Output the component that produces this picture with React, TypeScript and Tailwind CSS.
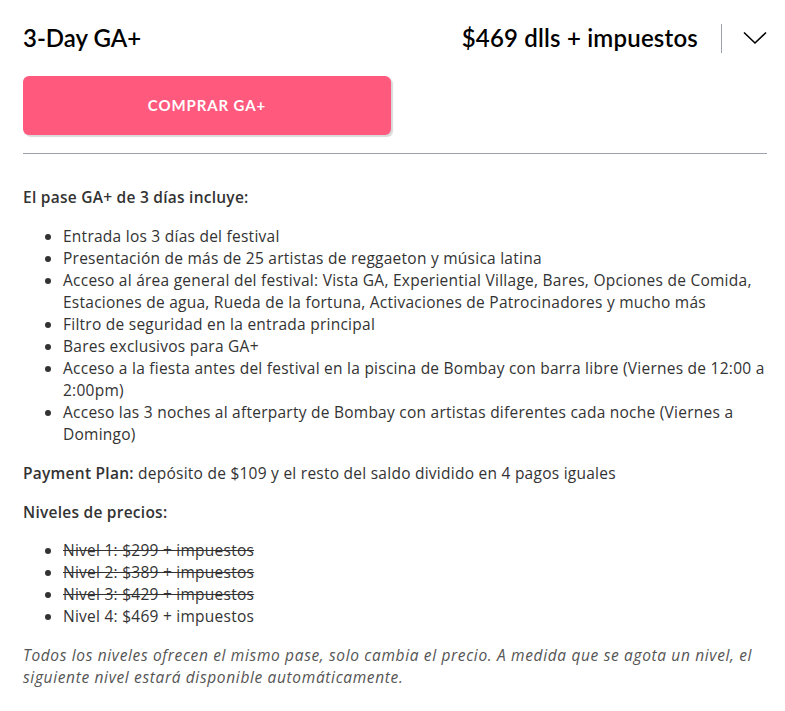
import { Fragment } from "react";

// each entry is one list item, split where the reference wraps
const items: string[][] = [
    ["Entrada los 3 días del festival"],
    ["Presentación de más de 25 artistas de reggaeton y música latina"],
    ["Acceso al área general del festival: Vista GA, Experiential Village, Bares, Opciones de Comida,", "Estaciones de agua, Rueda de la fortuna, Activaciones de Patrocinadores y mucho más"],
    ["Filtro de seguridad en la entrada principal"],
    ["Bares exclusivos para GA+"],
    ["Acceso a la fiesta antes del festival en la piscina de Bombay con barra libre (Viernes de 12:00 a", "2:00pm)"],
    ["Acceso las 3 noches al afterparty de Bombay con artistas diferentes cada noche (Viernes a", "Domingo)"],
];

const tiers = [
    { label: "Nivel 1: $299 + impuestos", gone: true },
    { label: "Nivel 2: $389 + impuestos", gone: true },
    { label: "Nivel 3: $429 + impuestos", gone: true },
    { label: "Nivel 4: $469 + impuestos", gone: false },
];

export default function App() {
    return <div className="bg-white min-h-[711px] pl-[23px] pr-[18px] pt-[20px] text-[#333]">
        {/* header */}
        <div className="flex items-center h-[36px] font-['Lato',sans-serif]">
            <h1 className="text-[24px] font-semibold text-black flex-1">3-Day GA+</h1>
            <div className="text-[24px] font-semibold text-black tracking-[0.2px]">$469 dlls + impuestos</div>
            <div className="w-px h-[29px] bg-gray-400 ml-[23px]" />
            <button className="ml-[21px] text-black">
                <svg width="24" height="14" viewBox="0 0 24 14" fill="none" stroke="currentColor" strokeWidth="1.6">
                    <polyline points="1,1.5 12,12 23,1.5" />
                </svg>
            </button>
        </div>

        <button className="mt-[20px] w-[368px] h-[59px] rounded-md bg-[#ff5a7e] text-white font-bold text-[15px] tracking-[0.06em] font-['Lato',sans-serif] shadow-[2px_2px_1px_rgba(0,0,0,0.15)]">
            COMPRAR GA+
        </button>

        <div className="mt-[18px] border-t border-gray-400" />

        <div className="text-[15.5px] tracking-[0.25px] leading-[22px] pt-[32px] font-['Open_Sans',sans-serif]">
            <p className="font-semibold">El pase GA+ de 3 días incluye:</p>
            <ul className="mt-[17px] list-disc pl-[40px]">
                {items.map((lines, i) => <li key={i}>
                    {lines.map((l, j) => <Fragment key={j}>{j > 0 && <br />}{l}</Fragment>)}
                </li>)}
            </ul>
            <p className="mt-[17px]"><span className="font-semibold">Payment Plan:</span> depósito de $109 y el resto del saldo dividido en 4 pagos iguales</p>
            <p className="mt-[17px] font-semibold">Niveles de precios:</p>
            <ul className="mt-[16px] list-disc pl-[40px]">
                {tiers.map((t) => <li key={t.label} className={t.gone ? 'line-through' : ''}>{t.label}</li>)}
            </ul>
            <p className="mt-[17px] italic text-[#555] tracking-[0.65px]">
                Todos los niveles ofrecen el mismo pase, solo cambia el precio. A medida que se agota un nivel, el<br />
                siguiente nivel estará disponible automáticamente.
            </p>
        </div>
    </div>
}
